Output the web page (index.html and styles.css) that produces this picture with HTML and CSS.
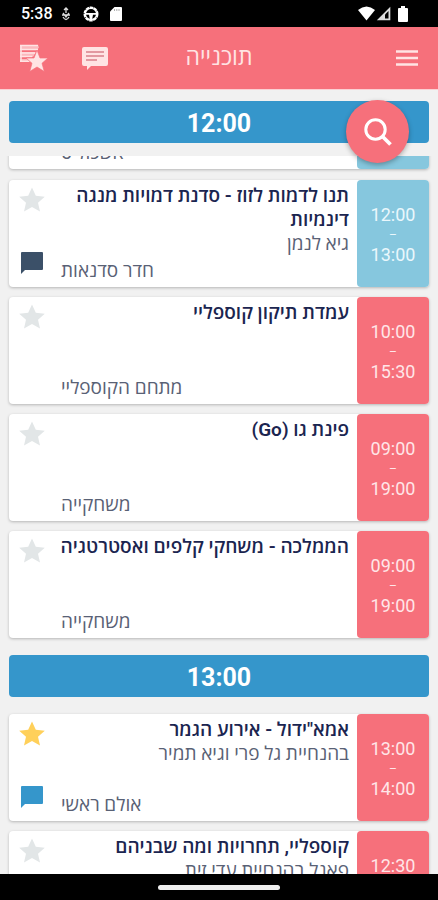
FILE: index.html
```html
<!DOCTYPE html>
<html lang="he" dir="rtl">
<head>
<meta charset="utf-8">
<meta name="viewport" content="width=device-width, initial-scale=1">
<title>תוכנייה</title>
<link rel="stylesheet" href="styles.css">
</head>
<body>
<svg class="defs" aria-hidden="true">
  <symbol id="star" viewBox="0 0 26 26"><path d="M13 .5 16.800 8.800 25.800 9.700 19 15.800 21 24.600 13 20 5 24.600 7 15.800 .2 9.700 9.200 8.800Z"/></symbol>
  <symbol id="chat" viewBox="0 0 24 24"><path d="M2 1H22A1 1 0 0 1 23 2V18A1 1 0 0 1 22 19H5L1 23V2A1 1 0 0 1 2 1Z"/></symbol>
</svg>

<div class="status" dir="ltr">
  <span class="clock">5:38</span>
  <svg class="s-usb" viewBox="0 0 10 14"><path d="M5 1V6M3 3 5 1 7 3M2 6 5 10 8 6M2 10Q5 15 8 10M1 8H9" fill="none" stroke="#ddd" stroke-width="1.3"/></svg>
  <svg class="s-wheel" viewBox="0 0 16 16"><circle cx="8" cy="8" r="6.5" fill="none" stroke="#fff" stroke-width="2" stroke-dasharray="3.600 .5"/><circle cx="8" cy="8" r="5.600" fill="none" stroke="#fff" stroke-width="1.200"/><path d="M2 7H14V8.800H10L9 14H7L6 8.800H2Z" fill="#fff"/></svg>
  <svg class="s-card" viewBox="0 0 12 16"><path d="M4.500 1H11A1 1 0 0 1 12 2V14A1 1 0 0 1 11 15H1A1 1 0 0 1 0 14V5.500Z" fill="#fff"/><path d="M4.500 3V5M6.800 3V5M9 3V5" stroke="#999" stroke-width=".8"/></svg>
  <span class="spacer"></span>
  <svg class="s-wifi" viewBox="0 0 17 15"><path d="M0 4Q8.500-3 17 4L8.500 14.500Z" fill="#fff"/></svg>
  <svg class="s-signal" viewBox="0 0 15 15"><path d="M14.300.8V14.300H.8Z" fill="#ddd"/><path d="M12.500 5V12.500H9V8.500Z" fill="#000"/></svg>
  <svg class="s-batt" viewBox="0 0 10 16"><path d="M3 0H7V2H9A1 1 0 0 1 10 3V15A1 1 0 0 1 9 16H1A1 1 0 0 1 0 15V3A1 1 0 0 1 1 2H3Z" fill="#fff"/></svg>
</div>

<header class="toolbar">
  <div class="side">
    <button class="icon-btn" aria-label="תפריט"><svg class="i-menu" viewBox="0 0 22 16"><path d="M0 1.500H22M0 8H22M0 14.500H22" stroke="#ffe4e4" stroke-width="2.600"/></svg></button>
  </div>
  <h1>תוכנייה</h1>
  <div class="side end">
    <button class="icon-btn" aria-label="הודעות"><svg class="i-msg" viewBox="0 0 26 24"><path d="M2 1H24A2 2 0 0 1 26 3V18A2 2 0 0 1 24 20H9L5 24V20H2A2 2 0 0 1 0 18V3A2 2 0 0 1 2 1Z" fill="#ffe4e4"/><path d="M4 6H22M4 10H22M4 14H15" stroke="#d9808a" stroke-width="1.400"/></svg></button>
    <button class="icon-btn" aria-label="האירועים שלי"><svg class="i-fav" viewBox="0 0 28 28"><path d="M0 1H18L19 3.500 17 6H0ZM0 8H16L13 13H0ZM0 15H9L12 18H0Z" fill="#fbb9bd"/><path d="M0 1.500H18M0 5.500H18M0 9H15M0 12.500H12M0 17.300H9M1 1V18" stroke="#ffe4e4" stroke-width="1.500"/><path d="M17 6 20 14H28L22 19.300 24.300 27.500 17 23 9.700 27.500 12 19.300 6 14H14Z" fill="#ffe4e4" stroke="#f6707b" stroke-width=".7"/></svg></button>
  </div>
</header>

<main class="schedule">
  <button class="search" aria-label="חיפוש"><svg viewBox="0 0 30 30"><circle cx="12.500" cy="12.500" r="9.700" fill="none" stroke="#fff" stroke-width="3"/><path d="M19.500 19.500 27.500 27.500" stroke="#fff" stroke-width="3.800"/></svg></button>

  <h2 class="hour">12:00</h2>
  <div class="scrolled">
    <article class="card">
      <div class="time blue"></div>
      <div class="info"><p class="room">אשכול 5</p></div>
      <div class="actions"></div>
    </article>
  </div>
  <section class="events">
    <article class="card">
      <div class="time blue"><span>12:00</span><span class="dash">–</span><span>13:00</span></div>
      <div class="info"><h3>תנו לדמות לזוז - סדנת דמויות מנגה דינמיות</h3><p>גיא לנמן</p><p class="room">חדר סדנאות</p></div>
      <div class="actions"><button aria-label="מועדף"><svg class="star"><use href="#star"/></svg></button><button aria-label="משוב"><svg class="chat"><use href="#chat"/></svg></button></div>
    </article>
    <article class="card">
      <div class="time"><span>10:00</span><span class="dash">–</span><span>15:30</span></div>
      <div class="info"><h3>עמדת תיקון קוספליי</h3><p class="room">מתחם הקוספליי</p></div>
      <div class="actions"><button aria-label="מועדף"><svg class="star"><use href="#star"/></svg></button></div>
    </article>
    <article class="card">
      <div class="time"><span>09:00</span><span class="dash">–</span><span>19:00</span></div>
      <div class="info"><h3>פינת גו (Go)</h3><p class="room">משחקייה</p></div>
      <div class="actions"><button aria-label="מועדף"><svg class="star"><use href="#star"/></svg></button></div>
    </article>
    <article class="card">
      <div class="time"><span>09:00</span><span class="dash">–</span><span>19:00</span></div>
      <div class="info"><h3>הממלכה - משחקי קלפים ואסטרטגיה</h3><p class="room">משחקייה</p></div>
      <div class="actions"><button aria-label="מועדף"><svg class="star"><use href="#star"/></svg></button></div>
    </article>
  </section>

  <h2 class="hour">13:00</h2>
  <section class="events">
    <article class="card">
      <div class="time"><span>13:00</span><span class="dash">–</span><span>14:00</span></div>
      <div class="info"><h3>אמא"ידול - אירוע הגמר</h3><p>בהנחיית גל פרי וגיא תמיר</p><p class="room">אולם ראשי</p></div>
      <div class="actions"><button aria-label="מועדף"><svg class="star on"><use href="#star"/></svg></button><button aria-label="משוב"><svg class="chat on"><use href="#chat"/></svg></button></div>
    </article>
    <article class="card">
      <div class="time"><span>12:30</span><span class="dash">–</span><span>13:30</span></div>
      <div class="info"><h3>קוספליי, תחרויות ומה שבניהם</h3><p>פאנל בהנחיית עדי זית</p></div>
      <div class="actions"><button aria-label="מועדף"><svg class="star"><use href="#star"/></svg></button></div>
    </article>
  </section>
</main>

<footer class="navbar"><span class="pill"></span></footer>
</body>
</html>
```
FILE: styles.css
```css
* { box-sizing: border-box; margin: 0; padding: 0; }

body {
  display: flex;
  flex-direction: column;
  height: 100vh;
  overflow: hidden;
  background: #f1f1f1;
  color: #1b2550;
  font-family: Roboto, "Open Sans", sans-serif;
  font-size: 18px;
  line-height: 24px;
}

button { border: 0; background: none; display: block; cursor: pointer; }
svg { display: block; }
.defs { position: absolute; width: 0; height: 0; }

.status {
  flex: none;
  display: flex;
  align-items: center;
  height: 27px;
  padding: 0 30px 0 21px;
  background: #000;
  color: #fff;
  font-size: 16px;
  font-weight: 500;
}
.clock { margin-right: 8px; }
.s-usb { width: 10px; height: 14px; margin-right: 12px; }
.s-wheel { width: 16px; height: 16px; margin-right: 11px; }
.s-card { width: 12px; height: 16px; }
.spacer { flex: 1; }
.s-wifi { width: 17px; height: 15px; margin-right: 1px; }
.s-signal { width: 15px; height: 15px; margin-right: 7px; }
.s-batt { width: 10px; height: 16px; }

.toolbar {
  flex: none;
  display: flex;
  align-items: center;
  height: 63px;
  padding: 0 20px;
  background: #f6707b;
  border-bottom: 1px solid #fbd0d3;
  color: #ffe4e4;
}
.toolbar h1 { font-size: 23px; line-height: 32px; font-weight: 500; }
.side { flex: 1; display: flex; }
.end { justify-content: flex-end; gap: 34px; }
.i-menu { width: 22px; height: 16px; }
.i-msg { width: 26px; height: 24px; }
.i-fav { width: 28px; height: 28px; }
.icon-btn { display: flex; align-items: center; }

.schedule {
  flex: 1;
  min-height: 0;
  position: relative;
  overflow: hidden;
  padding: 11px 9px 0;
}

.search {
  position: absolute;
  z-index: 1;
  top: 10px;
  right: 29px;
  width: 63px;
  height: 63px;
  display: flex;
  align-items: center;
  justify-content: center;
  border-radius: 50%;
  background: #f6707b;
  box-shadow: 0 2px 5px rgba(0, 0, 0, .3);
}
.search svg { width: 30px; height: 30px; }

.hour {
  height: 42px;
  border-radius: 4px;
  background: #3596cb;
  color: #fff;
  font-size: 25px;
  line-height: 45px;
  font-weight: 700;
  text-align: center;
}
.events + .hour { margin: 17px 0; }

.scrolled {
  display: flex;
  align-items: flex-end;
  height: 13px;
  margin: 13px 0 11px;
  clip-path: inset(0 -4px -4px);
}
.scrolled .card { flex: 1; }

.events { display: grid; gap: 10px; }

.card {
  display: flex;
  height: 107px;
  border-radius: 4px;
  background: #fff;
  box-shadow: 0 1px 3px rgba(0, 0, 0, .25);
}
.time {
  flex: none;
  width: 72px;
  display: flex;
  flex-direction: column;
  align-items: center;
  justify-content: center;
  padding-top: 2px;
  border-radius: 4px;
  background: #f6707b;
  color: #ffe6e8;
}
.time.blue { background: #86c7de; color: #eaf7fc; }
.time .dash { font-size: 12px; line-height: 16px; }

.info {
  flex: 1;
  min-width: 0;
  display: flex;
  flex-direction: column;
  padding: 4px 8px 4px 0;
  font-size: 19px;
}
.info h3 { font-size: 19px; font-weight: 600; }
.info p { color: #596175; }
.info .room { margin-top: auto; padding-left: 6px; text-align: left; }

.actions {
  flex: none;
  width: 46px;
  display: flex;
  flex-direction: column;
  align-items: flex-start;
  justify-content: space-between;
  padding: 7px 0 12px 9px;
}
.star { width: 26px; height: 26px; fill: #e2e6e7; }
.star.on { fill: #ffd05a; }
.chat { width: 24px; height: 24px; fill: #3b5068; }
.chat.on { fill: #3596cb; }
.actions { align-items: center; padding-left: 0; }

.navbar {
  flex: none;
  display: flex;
  align-items: center;
  justify-content: center;
  height: 26px;
  background: #000;
}
.pill { width: 122px; height: 5px; border-radius: 3px; background: #eee; }
```
